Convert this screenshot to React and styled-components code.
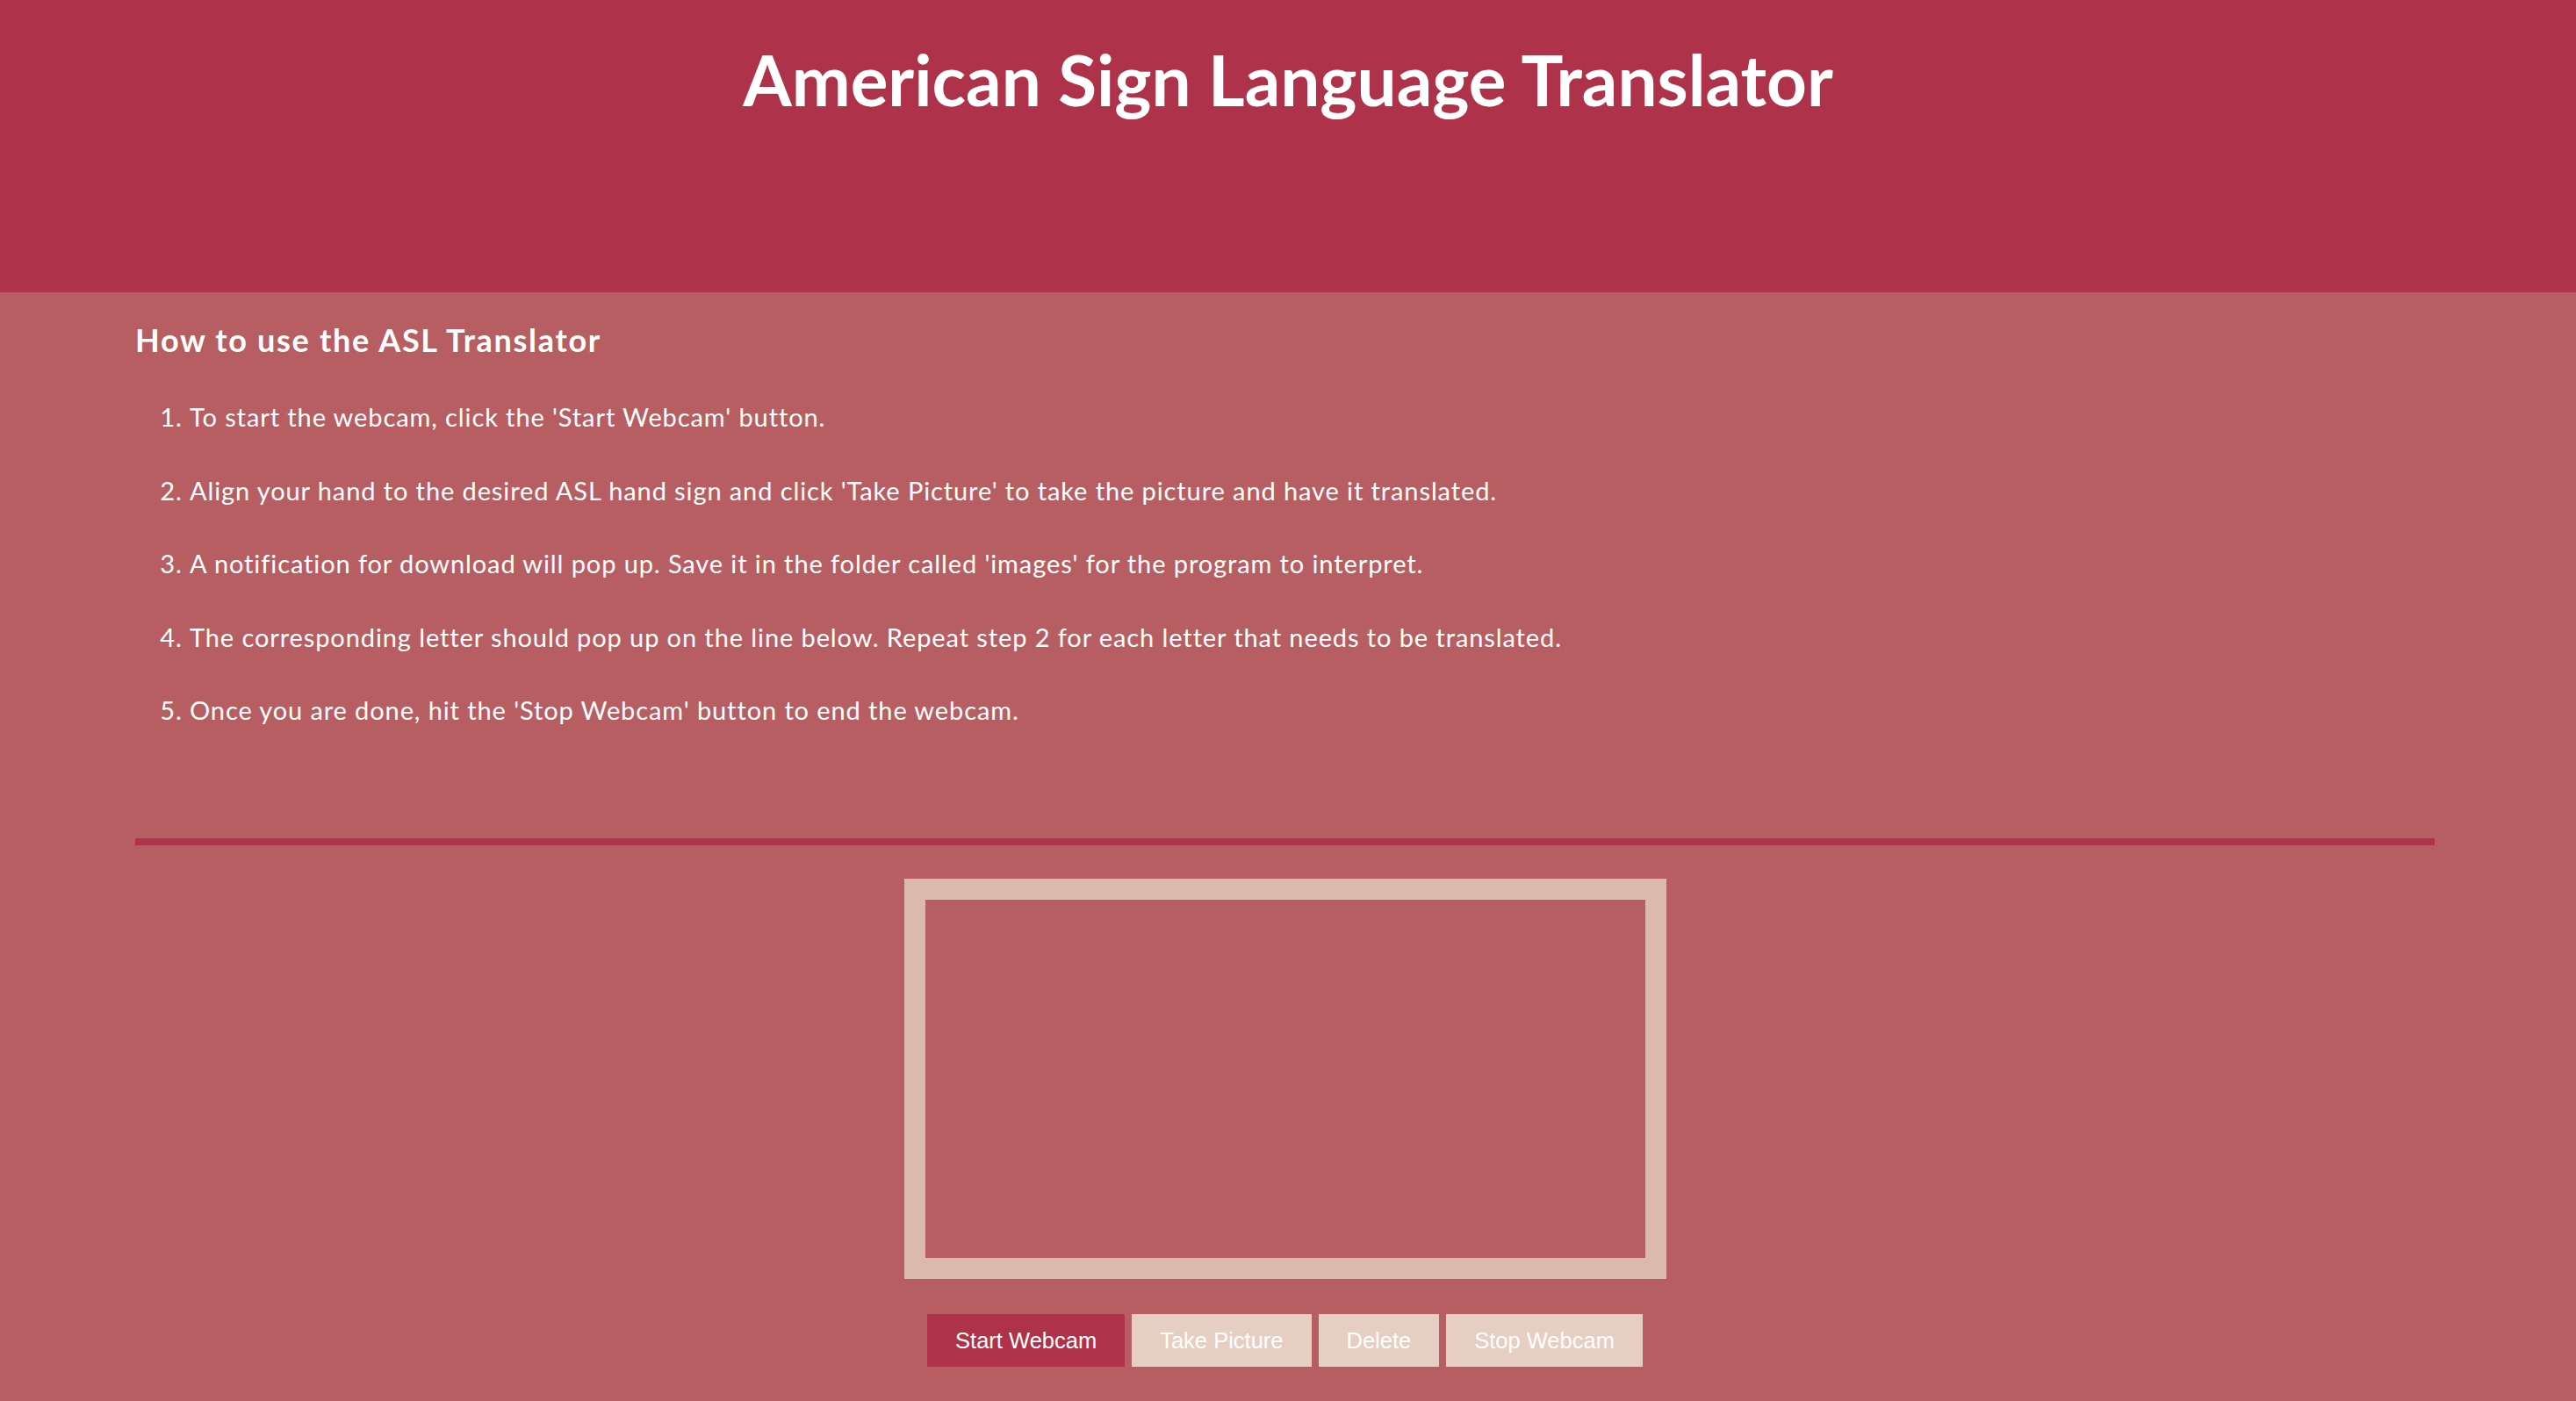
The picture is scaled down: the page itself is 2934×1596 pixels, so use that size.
import styled, { createGlobalStyle } from 'styled-components'

const GlobalStyle = createGlobalStyle`
  html, body {
    margin: 0;
    padding: 0;
    background: #b75e63;
  }
  body {
    font-family: Lato, "Open Sans", sans-serif;
    color: #fff;
  }
`

const steps = [
  "To start the webcam, click the 'Start Webcam' button.",
  "Align your hand to the desired ASL hand sign and click 'Take Picture' to take the picture and have it translated.",
  "A notification for download will pop up. Save it in the folder called 'images' for the program to interpret.",
  'The corresponding letter should pop up on the line below. Repeat step 2 for each letter that needs to be translated.',
  "Once you are done, hit the 'Stop Webcam' button to end the webcam.",
]

const buttons = [
  { label: 'Start Webcam', primary: true },
  { label: 'Take Picture' },
  { label: 'Delete' },
  { label: 'Stop Webcam' },
]

export default function App() {
  return (
    <>
      <GlobalStyle />
      <Header>
        <Title>American Sign Language Translator</Title>
      </Header>
      <Main>
        <Instructions>
          <Heading>How to use the ASL Translator</Heading>
          <Steps>
            {steps.map((step) => (
              <Step key={step}>{step}</Step>
            ))}
          </Steps>
        </Instructions>
        <Divider />
        <WebcamFrame>
          <Video />
        </WebcamFrame>
        <ButtonRow>
          {buttons.map(({ label, primary }) => (
            <ActionButton key={label} $primary={primary}>
              {label}
            </ActionButton>
          ))}
        </ButtonRow>
      </Main>
    </>
  )
}

const Header = styled.header`
  height: 333px;
  background-color: #ae3249;
  display: flex;
  justify-content: center;
  align-items: flex-start;
  box-sizing: border-box;
  padding-top: 42px;
`

const Title = styled.h1`
  margin: 0;
  font-size: 80px;
  line-height: 96px;
  font-weight: 700;
`

const Main = styled.main`
  padding: 0 161px 39px 154px;
  display: flex;
  flex-direction: column;
`

const Instructions = styled.section`
  display: flex;
  flex-direction: column;
`

const Heading = styled.h2`
  margin: 34px 0 0;
  font-size: 36px;
  line-height: 40px;
  font-weight: 700;
  letter-spacing: 1.7px;
`

const Steps = styled.ol`
  margin: 51px 0 0;
  padding-left: 62px;
  display: flex;
  flex-direction: column;
  gap: 49.5px;
`

const Step = styled.li`
  font-size: 29px;
  line-height: 34px;
  letter-spacing: 0.9px;
`

const Divider = styled.hr`
  margin: 129px 0 0;
  border: none;
  height: 8px;
  background-color: #ae3249;
`

const WebcamFrame = styled.div`
  align-self: center;
  margin-top: 38px;
  width: 868px;
  height: 456px;
  box-sizing: border-box;
  border: 24px solid #dbbaab;
`

const Video = styled.div`
  width: 100%;
  height: 100%;
`

const ButtonRow = styled.div`
  margin-top: 40px;
  display: flex;
  justify-content: center;
  gap: 8px;
`

const ActionButton = styled.button`
  height: 60px;
  padding: 0 32px;
  border: none;
  font-family: "Liberation Sans", Arial, sans-serif;
  font-size: 25.5px;
  color: #fff;
  background-color: ${({ $primary }) => ($primary ? '#ae3249' : '#e7cec3')};
  cursor: pointer;
`
